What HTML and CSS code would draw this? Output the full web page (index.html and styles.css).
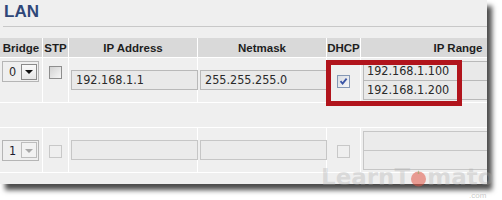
FILE: index.html
```html
<!DOCTYPE html>
<html>
<head>
<meta charset="utf-8">
<link rel="stylesheet" href="styles.css">
</head>
<body>
<div class="page">
  <div class="panel">
    <h1 class="title">LAN</h1>
    <div class="rule"></div>
    <div class="table-wrap">
      <table class="grid">
        <colgroup>
          <col class="c-bridge"><col class="c-stp"><col class="c-ip"><col class="c-mask"><col class="c-dhcp"><col class="c-range">
        </colgroup>
        <thead>
          <tr><th>Bridge</th><th>STP</th><th>IP Address</th><th>Netmask</th><th>DHCP</th><th>IP Range</th></tr>
        </thead>
        <tbody>
          <tr class="row">
            <td class="cell-top"><div class="sel"><span class="sel-val">0</span><span class="sel-btn"><i class="tri"></i></span></div></td>
            <td class="cell-top cell-center"><span class="cb cb-stp"></span></td>
            <td><div class="inp">192.168.1.1</div></td>
            <td><div class="inp">255.255.255.0</div></td>
            <td class="cell-center"><span class="cb checked"><svg width="11" height="11" viewBox="0 0 11 11"><path d="M2.5 5.2 L4.6 7.6 L8.6 2.6" fill="none" stroke="#3a55a6" stroke-width="1.8"/></svg></span></td>
            <td><div class="inp range">192.168.1.100</div><div class="inp range second">192.168.1.200</div></td>
          </tr>
          <tr class="spacer"><td colspan="6"></td></tr>
          <tr class="row disabled">
            <td><div class="sel"><span class="sel-val">1</span><span class="sel-btn"><i class="tri"></i></span></div></td>
            <td class="cell-center"><span class="cb"></span></td>
            <td><div class="inp"></div></td>
            <td><div class="inp"></div></td>
            <td class="cell-center"><span class="cb"></span></td>
            <td><div class="inp range"></div><div class="inp range second"></div></td>
          </tr>
        </tbody>
      </table>
    </div>
  </div>
  <div class="highlight"></div>
  <div class="watermark">LearnT<span class="tomato"><svg width="17" height="19" viewBox="0 0 17 19"><circle cx="8.5" cy="11" r="7.5" fill="rgba(225,85,70,0.55)"/><path d="M5 4 L8.5 6 L12 4 L9.5 5.5 L8.5 2 L7.5 5.5 Z" fill="rgba(120,170,90,0.5)"/></svg></span>mato</div>
  <div class="dotcom">.com</div>
</div>
</body>
</html>
```

FILE: styles.css
```css
html, body {
  margin: 0;
  padding: 0;
  background: #ffffff;
}

.page {
  position: relative;
  width: 502px;
  height: 200px;
  overflow: hidden;
}

.panel {
  width: 487px;
  height: 184px;
  background: #efefef;
  box-shadow: 5px 6px 5px rgba(0, 0, 0, 0.7);
}

.title {
  margin: 0;
  padding: 2px 0 0 4px;
  height: 20px;
  font: bold 17px/20px "Liberation Sans", Arial, sans-serif;
  color: #2f4779;
}

.rule {
  margin: 4px 0 0 3px;
  border-top: 1px solid #c8c8c8;
}

.table-wrap {
  margin-top: 11px;
  width: 487px;
  overflow: hidden;
}

.grid {
  table-layout: fixed;
  border-collapse: separate;
  border-spacing: 0;
  width: 556px;
}

.c-bridge { width: 43px; }
.c-stp { width: 26px; }
.c-ip { width: 129px; }
.c-mask { width: 129px; }
.c-dhcp { width: 34px; }
.c-range { width: 195px; }

.grid th,
.grid td {
  padding: 0;
  border-right: 1px solid #ffffff;
  border-bottom: 1px solid #ffffff;
}

.grid th {
  height: 19px;
  background: #d9d9d9;
  font: bold 11.5px "Liberation Sans", Arial, sans-serif;
  color: #1e1e1e;
  text-align: center;
  vertical-align: middle;
}

.grid td {
  vertical-align: middle;
  background: #efefef;
}

.row td {
  height: 44px;
}

.spacer td {
  height: 24px;
  border-right: none;
}

.cell-top {
  vertical-align: top !important;
}

.cell-center {
  text-align: center;
}

.sel {
  display: flex;
  align-items: center;
  box-sizing: border-box;
  width: 37px;
  height: 21px;
  margin-left: 2px;
  border: 1px solid #b5b5b5;
  background: #efefef;
}

.cell-top .sel {
  margin-top: 3px;
}

.sel-val {
  width: 17px;
  padding-left: 1px;
  text-align: center;
  font: 12.5px "DejaVu Sans Condensed", "DejaVu Sans", sans-serif;
  color: #2a2a2a;
}

.sel-btn {
  display: flex;
  align-items: center;
  justify-content: center;
  box-sizing: border-box;
  width: 16px;
  height: 16px;
  border: 1px solid #8a8a8a;
  background: linear-gradient(#fafafa, #e6e6e6);
}

.tri {
  width: 0;
  height: 0;
  border-left: 4px solid transparent;
  border-right: 4px solid transparent;
  border-top: 4px solid #111111;
  margin-top: 1px;
}

.disabled .sel-val {
  color: #1c1c30;
}

.disabled .sel-btn {
  border-color: #bdbdbd;
  background: #f2f2f2;
}

.disabled .tri {
  border-top-color: #a8a8a8;
}

.cb {
  display: inline-flex;
  align-items: center;
  justify-content: center;
  box-sizing: border-box;
  width: 13px;
  height: 13px;
  vertical-align: middle;
  border: 1px solid #c8c8c8;
  background: #efefef;
}

.cb-stp {
  margin-top: 8px;
  border-color: #8e8e8e;
  background: linear-gradient(135deg, #d2d2d2, #f6f6f6);
}

.cb.checked {
  border-color: #8598b5;
  background: linear-gradient(135deg, #d9dde4, #f7f7f7);
}

.inp {
  box-sizing: border-box;
  width: 127px;
  height: 20px;
  margin-left: 2px;
  padding: 0 4px;
  border: 1px solid #b9b9b9;
  background: #e9e9e9;
  font: 12.5px/18px "DejaVu Sans Condensed", "DejaVu Sans", sans-serif;
  color: #2a2a2a;
  white-space: nowrap;
}

.inp.range {
  width: 190px;
  padding-left: 3px;
}

.inp.second {
  margin-top: -1px;
}

.disabled .inp {
  border-color: #c6c6c6;
  background: #ebebeb;
}

.highlight {
  position: absolute;
  left: 326px;
  top: 60px;
  width: 136px;
  height: 46px;
  box-sizing: border-box;
  border: 5px solid #b1141c;
}

.watermark {
  position: absolute;
  left: 321px;
  top: 167px;
  font: bold 23px/20px "DejaVu Sans", sans-serif;
  color: rgba(170, 170, 170, 0.33);
  white-space: nowrap;
}

.tomato {
  display: inline-block;
  width: 17px;
  height: 19px;
  vertical-align: -2px;
}

.tomato svg {
  display: block;
}

.dotcom {
  position: absolute;
  left: 469px;
  top: 192px;
  font: 8px/8px "Liberation Sans", Arial, sans-serif;
  color: rgba(165, 165, 165, 0.6);
}
```
